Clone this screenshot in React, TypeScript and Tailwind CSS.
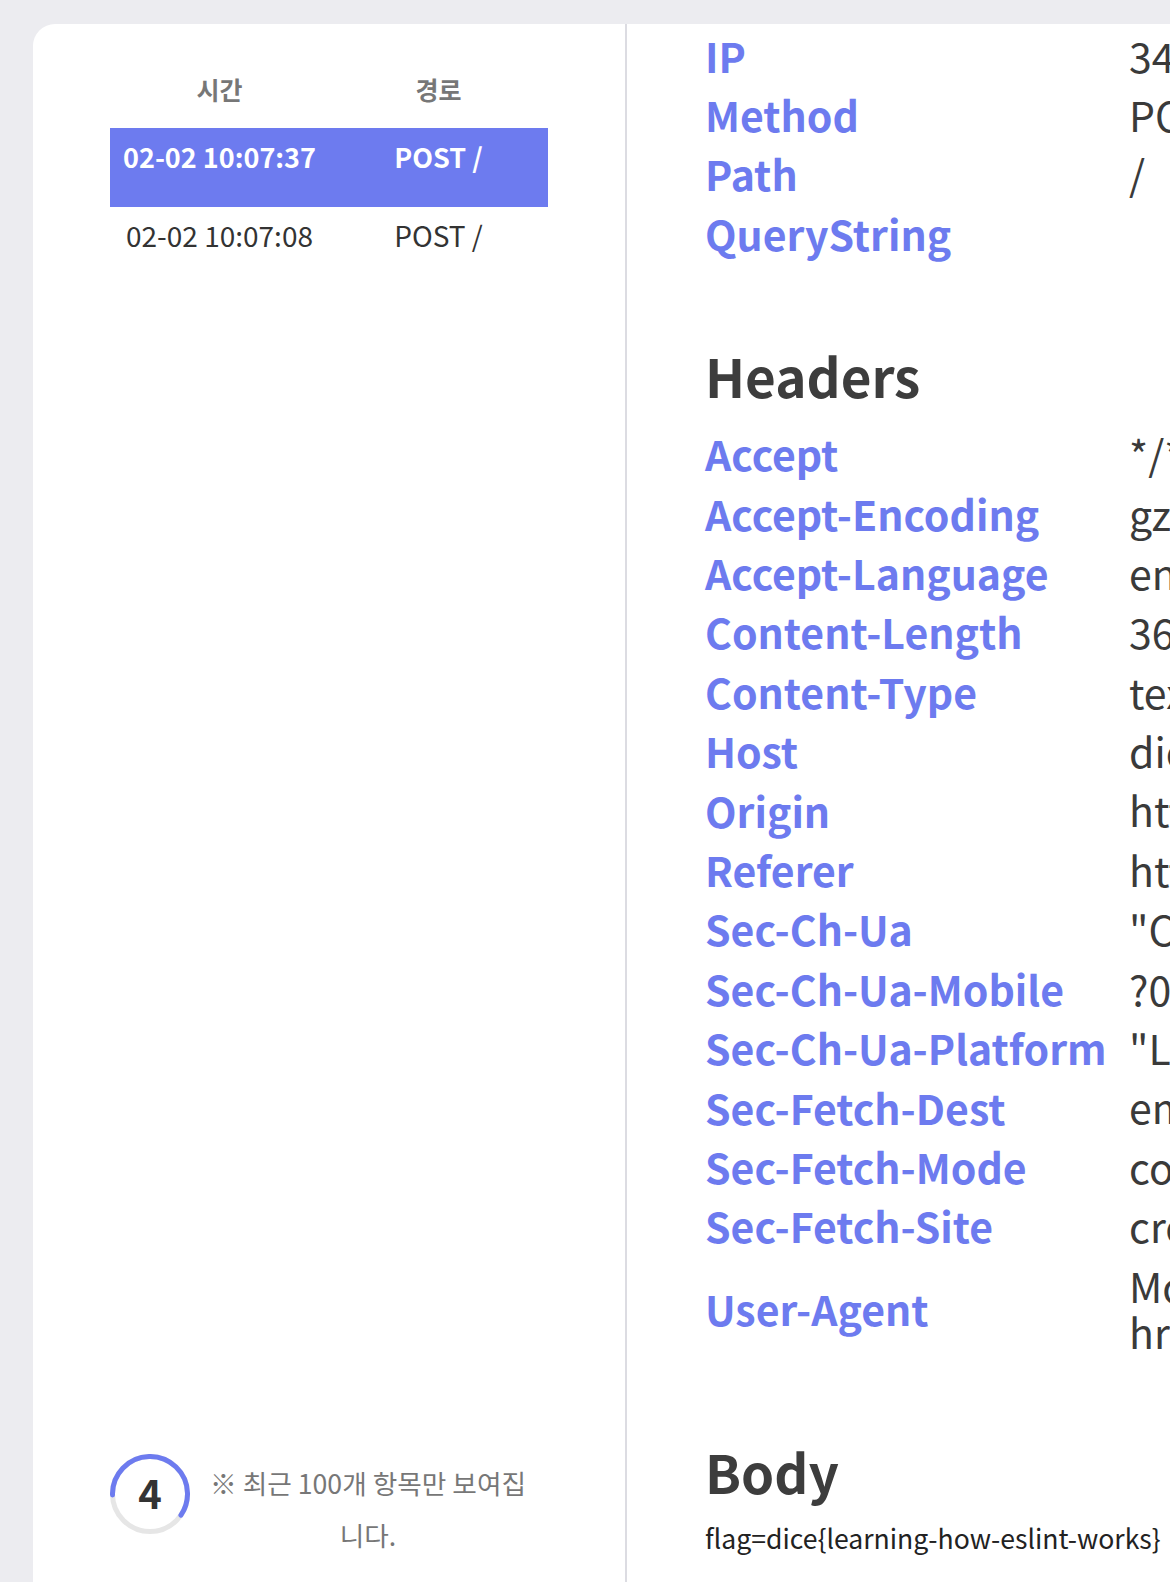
import React from "react";

type Row = { key: string; value: string[] };

const general: Row[] = [
  { key: "IP", value: ["34.64.130.75"] },
  { key: "Method", value: ["POST"] },
  { key: "Path", value: ["/"] },
  { key: "QueryString", value: [""] },
];

const headers: Row[] = [
  { key: "Accept", value: ["*/*"] },
  { key: "Accept-Encoding", value: ["gzip, deflate, br"] },
  { key: "Accept-Language", value: ["en-US,en;q=0.9"] },
  { key: "Content-Length", value: ["36"] },
  { key: "Content-Type", value: ["text/plain;charset=UTF-8"] },
  { key: "Host", value: ["dicehook.mc.ax"] },
  { key: "Origin", value: ["http://localhost:3000"] },
  { key: "Referer", value: ["http://localhost:3000/"] },
  { key: "Sec-Ch-Ua", value: ['"Chromium";v="120", "Not_A Brand";v="8"'] },
  { key: "Sec-Ch-Ua-Mobile", value: ["?0"] },
  { key: "Sec-Ch-Ua-Platform", value: ['"Linux"'] },
  { key: "Sec-Fetch-Dest", value: ["empty"] },
  { key: "Sec-Fetch-Mode", value: ["cors"] },
  { key: "Sec-Fetch-Site", value: ["cross-site"] },
  {
    key: "User-Agent",
    value: [
      "Mozilla/5.0 (X11; Linux x86_64) AppleWebKit/537.36 (KHTML, like Gecko) C",
      "hrome/120.0.0.0 Safari/537.36",
    ],
  },
];

const requests = [
  { time: "02-02 10:07:37", path: "POST /" },
  { time: "02-02 10:07:08", path: "POST /" },
];

function KeyValue({ row }: { row: Row }) {
  const multi = row.value.length > 1;
  return (
    <div className={multi ? "flex min-h-[59.4px] items-center py-[7px]" : "flex min-h-[59.4px] items-center py-[3px]"}>
      <div className="w-[424px] shrink-0 whitespace-nowrap text-[41px] font-bold leading-[46px] text-[#6d7bef]">
        {row.key}
      </div>
      <div className="whitespace-nowrap text-[41px] leading-[46.3px] text-[#3a3a3a]">
        {row.value.map((line, i) => (
          <div key={i}>{line || "\u00a0"}</div>
        ))}
      </div>
    </div>
  );
}

function Countdown({ value, progress }: { value: number; progress: number }) {
  const r = 37.5;
  const c = 2 * Math.PI * r;
  return (
    <div className="relative h-[80px] w-[80px] shrink-0">
      <svg width="80" height="80" viewBox="0 0 80 80">
        <circle cx="40" cy="40" r={r} fill="none" stroke="#e6e6e6" strokeWidth="5" />
        <circle
          cx="40"
          cy="40"
          r={r}
          fill="none"
          stroke="#6d7bef"
          strokeWidth="5"
          strokeLinecap="round"
          strokeDasharray={`${c * progress - 5} ${c}`}
          transform="rotate(178.5 40 40)"
        />
      </svg>
      <div className="absolute inset-0 flex items-center justify-center pb-[4px] text-[40px] font-bold text-[#333]">
        {value}
      </div>
    </div>
  );
}

export default function App() {
  return (
    <div
      className="h-[1582px] w-full overflow-hidden bg-[#ececf0] pl-[33px] pt-[24px]"
      style={{ fontFamily: '"Noto Sans CJK KR", "Noto Sans", sans-serif' }}
    >
      <div className="flex h-full w-[1400px] rounded-tl-[22px] bg-white">
        {/* request list */}
        <div className="flex h-full w-[594px] shrink-0 flex-col border-r-2 border-[#dcdce2] px-[77px] pt-[49px]">
          <div className="grid grid-cols-2 text-center text-[25px] font-bold leading-[32px] text-[#777]">
            <div>시간</div>
            <div>경로</div>
          </div>
          <div className="mt-[23px]">
            {requests.map((r, i) => (
              <div
                key={i}
                className={
                  i === 0
                    ? "grid h-[79px] grid-cols-2 pt-[5px] text-center text-[27px] font-bold leading-[48px] text-white bg-[#6d7bef]"
                    : "grid h-[79px] grid-cols-2 pt-[4px] text-center text-[28px] leading-[48px] text-[#333]"
                }
              >
                <div>{r.time}</div>
                <div>{r.path}</div>
              </div>
            ))}
          </div>

          <div className="mt-auto flex items-start pb-[21px]">
            <Countdown value={4} progress={0.62} />
            <p className="ml-[16px] mt-[3px] w-[324px] text-center text-[26.7px] leading-[52px] text-[#777]">
              ※ 최근 100개 항목만 보여집니다.
            </p>
          </div>
        </div>

        {/* request detail */}
        <div className="min-w-0 flex-1 overflow-hidden pl-[78px] pt-[1px]">
          {general.map((row) => (
            <KeyValue key={row.key} row={row} />
          ))}

          <h2 className="mb-[13px] mt-[76px] text-[53px] font-bold leading-[72px] text-[#3d3d3d]">
            Headers
          </h2>
          {headers.map((row) => (
            <KeyValue key={row.key} row={row} />
          ))}

          <h2 className="mt-[73px] text-[53px] font-bold leading-[72px] text-[#3d3d3d]">Body</h2>
          <p className="mt-[11px] whitespace-nowrap text-[26.6px] leading-[40px] text-[#222]">
            flag=dice{"{"}learning-how-eslint-works{"}"}
          </p>
        </div>
      </div>
    </div>
  );
}
